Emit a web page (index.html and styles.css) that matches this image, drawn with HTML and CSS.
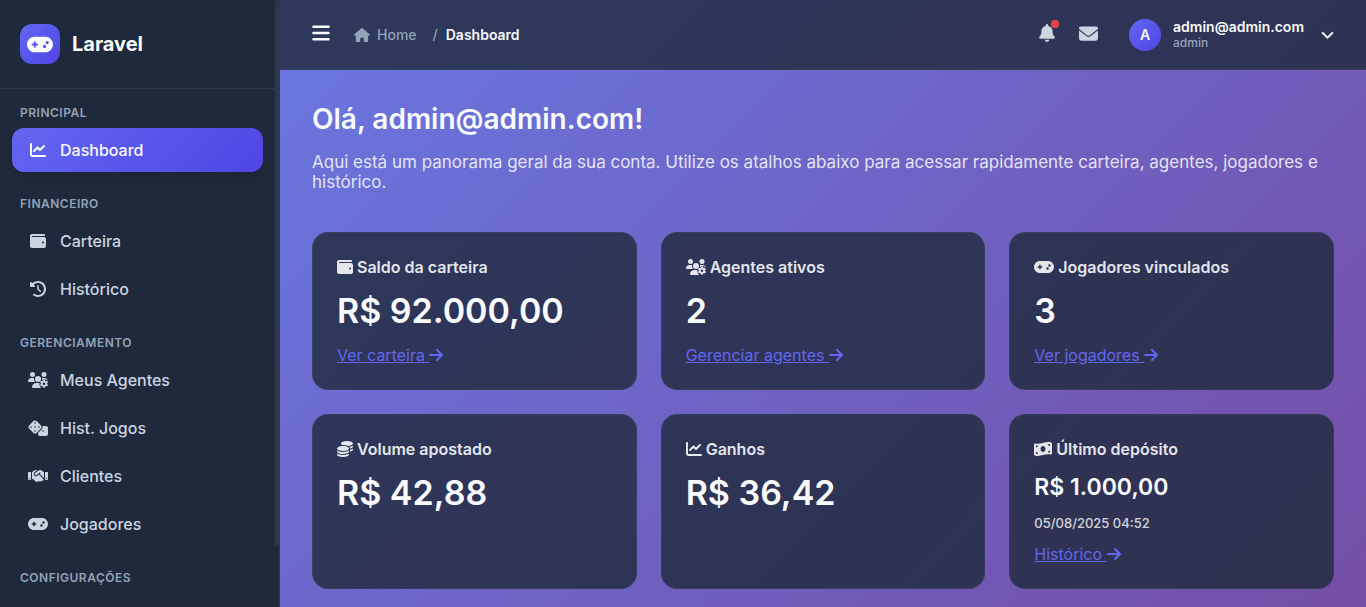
FILE: index.html
```html
<!DOCTYPE html>
<html lang="pt-BR">
<head>
<meta charset="utf-8">
<meta name="viewport" content="width=device-width, initial-scale=1">
<title>Dashboard - Laravel</title>
<link rel="stylesheet" href="styles.css">
</head>
<body>
<svg class="sprite" aria-hidden="true">
  <symbol id="gamepad" viewBox="0 0 640 512"><path fill-rule="evenodd" d="M192 64C86 64 0 150 0 256S86 448 192 448H448c106 0 192-86 192-192s-86-192-192-192H192zM496 168a40 40 0 1 1 0 80 40 40 0 1 1 0-80zM392 304a40 40 0 1 1 80 0 40 40 0 1 1 -80 0zM168 200c0-13.3 10.7-24 24-24s24 10.7 24 24v32h32c13.3 0 24 10.7 24 24s-10.7 24-24 24H216v32c0 13.3-10.7 24-24 24s-24-10.7-24-24V280H136c-13.3 0-24-10.7-24-24s10.7-24 24-24h32V200z"/></symbol>
  <symbol id="chart" viewBox="0 0 512 512"><path d="M64 64c0-17.7-14.3-32-32-32S0 46.3 0 64V400c0 44.2 35.8 80 80 80H480c17.7 0 32-14.3 32-32s-14.3-32-32-32H80c-8.8 0-16-7.2-16-16V64zm406.6 86.6c12.5-12.5 12.5-32.8 0-45.3s-32.8-12.5-45.3 0L320 210.7l-57.4-57.4c-12.5-12.5-32.8-12.5-45.3 0l-112 112c-12.5 12.5-12.5 32.8 0 45.3s32.8 12.5 45.3 0L240 221.3l57.4 57.4c12.5 12.5 32.8 12.5 45.3 0l128-128z"/></symbol>
  <symbol id="wallet" viewBox="0 0 512 512"><path fill-rule="evenodd" d="M64 32C28.7 32 0 60.7 0 96V416c0 35.3 28.7 64 64 64H448c35.3 0 64-28.7 64-64V192c0-35.3-28.7-64-64-64H80c-8.8 0-16-7.2-16-16s7.2-16 16-16H448c17.7 0 32-14.3 32-32s-14.3-32-32-32H64zM416 272a32 32 0 1 1 0 64 32 32 0 1 1 0-64z"/></symbol>
  <symbol id="history" viewBox="0 0 512 512"><path d="M75 75L41 41C25.9 25.9 0 36.6 0 57.9V168c0 13.3 10.7 24 24 24H134.1c21.4 0 32.1-25.9 17-41l-30.8-30.8C155 85.5 203 64 256 64c106 0 192 86 192 192s-86 192-192 192c-40.8 0-78.6-12.7-109.7-34.4c-14.5-10.1-34.4-6.6-44.6 7.9s-6.6 34.4 7.9 44.6C151.2 495 201.7 512 256 512c141.4 0 256-114.6 256-256S397.4 0 256 0C185.3 0 121.3 28.7 75 75zm181 53c-13.3 0-24 10.7-24 24V256c0 6.4 2.5 12.5 7 17l72 72c9.4 9.4 24.6 9.4 33.9 0s9.4-24.6 0-33.9l-65-65V152c0-13.3-10.7-24-24-24z"/></symbol>
  <symbol id="users" viewBox="0 0 640 512">
    <circle cx="144" cy="80" r="80"/><circle cx="512" cy="80" r="80"/><circle cx="320" cy="224" r="96"/>
    <path d="M21 320C9 320 0 310 0 299c0-59 48-107 107-107h43c16 0 31 3 45 10-2 7-3 14-3 22 0 38 17 72 43 96zM448 224c0-8-1-15-3-22 14-7 29-10 45-10h43c50 0 92 34 104 81-30-27-70-42-115-42-28 0-53 10-74 22zM128 485c0-74 60-133 133-133h92c5 0 10 0 15 1-10 60 8 120 52 159H155c-15 0-27-12-27-27z"/>
    <path fill-rule="evenodd" d="M480 246q32-8 64 0l6 36 21 12 35-12q22 24 32 54l-28 24v24l28 24q-10 30-32 54l-35-12-21 12-6 36q-32 8-64 0l-6-36-21-12-35 12q-22-24-32-54l28-24v-24l-28-24q10-30 32-54l35 12 21-12zM512 332a40 40 0 1 0 0 80 40 40 0 1 0 0-80z"/>
  </symbol>
  <symbol id="dice" viewBox="0 0 640 512"><path fill-rule="evenodd" d="M274.9 34.3c-28.1-28.1-73.7-28.1-101.8 0L34.3 173.1c-28.1 28.1-28.1 73.7 0 101.8L173.1 413.7c28.1 28.1 73.7 28.1 101.8 0L413.7 274.9c28.1-28.1 28.1-73.7 0-101.8L274.9 34.3zM200 224a24 24 0 1 1 48 0 24 24 0 1 1 -48 0zM96 200a24 24 0 1 1 0 48 24 24 0 1 1 0-48zM224 376a24 24 0 1 1 0-48 24 24 0 1 1 0 48zM352 200a24 24 0 1 1 0 48 24 24 0 1 1 0-48zM224 120a24 24 0 1 1 0-48 24 24 0 1 1 0 48zm96 328c0 35.3 28.7 64 64 64H576c35.3 0 64-28.7 64-64V256c0-35.3-28.7-64-64-64H461.7c11.6 36 3.1 77-25.4 105.5L320 413.8V448zM480 328a24 24 0 1 1 0 48 24 24 0 1 1 0-48z"/></symbol>
  <symbol id="handshake" viewBox="0 0 640 512"><path fill-rule="evenodd" d="M323.4 85.2l-96.8 78.4c-16.1 13-19.2 36.4-7 53.1c12.9 17.8 38 21.3 55.3 7.8l99.3-77.2c7-5.4 17-4.2 22.5 2.8s4.2 17-2.8 22.5l-20.9 16.2L512 316.8V128h-.7l-3.9-2.5L434.8 79c-15.3-9.8-33.2-15-51.4-15c-21.8 0-43 7.5-60 21.2zm22.8 124.4l-51.7 40.2C263 274.3 217.3 268 193.7 235.6c-22.2-30.5-16.6-73.1 12.7-96.8l83.2-67.3c-11.6-4.9-24.1-7.4-36.8-7.4C234 64 215.7 69.6 200 80l-72 48V352h28.2l91.4 83.4c19.6 17.9 49.9 16.5 67.8-3.1c5.5-6.1 9.2-13.2 11.1-20.6l17 15.6c19.5 17.9 49.9 16.6 67.8-2.9c4.5-4.9 7.8-10.6 9.9-16.5c19.4 13 45.8 10.3 62.1-7.5c17.9-19.5 16.6-49.9-2.9-67.8l-134.2-123zM16 128c-8.8 0-16 7.2-16 16V352c0 17.7 14.3 32 32 32H64c17.7 0 32-14.3 32-32V128H16zM48 320a16 16 0 1 1 0 32 16 16 0 1 1 0-32zM544 128V352c0 17.7 14.3 32 32 32h32c17.7 0 32-14.3 32-32V144c0-8.8-7.2-16-16-16H544zm32 208a16 16 0 1 1 32 0 16 16 0 1 1 -32 0z"/></symbol>
  <symbol id="coins" viewBox="0 0 512 512"><path d="M512 80c0 18-14.3 34.6-38.4 48c-29.1 16.1-72.5 27.5-122.3 30.9c-3.7-1.8-7.4-3.5-11.3-5C300.6 137.4 248.2 128 192 128c-8.3 0-16.4 .2-24.5 .6l-1.1-.6C142.3 114.6 128 98 128 80c0-44.2 86-80 192-80S512 35.8 512 80zM160.7 161.1c10.2-.7 20.7-1.1 31.3-1.1c62.2 0 117.4 12.3 152.5 31.4C369.3 204.9 384 221.7 384 240c0 4-.7 7.9-2.1 11.7c-4.6 13.2-17 25.3-35 35.5l-1.3 .7c-35 19.4-90.8 32-153.6 32c-59.6 0-112.9-11.3-148.2-29.1c-1.9-.9-3.7-1.9-5.5-2.9C14.3 274.6 0 258 0 240c0-34.8 53.4-64.5 128-75.4c10.5-1.5 21.4-2.7 32.7-3.5zM416 240c0-21.9-10.6-39.9-24.1-53.4c28.3-4.4 54.2-11.4 76.2-20.5c16.3-6.8 31.5-15.2 43.9-25.5V176c0 19.3-16.5 37.1-43.8 50.9c-14.6 7.4-32.4 13.7-52.4 18.5c.1-1.8 .2-3.5 .2-5.3zm-32 96c0 18-14.3 34.6-38.4 48c-1.8 1-3.6 1.9-5.5 2.9C304.9 404.7 251.6 416 192 416c-62.8 0-118.6-12.6-153.6-32C14.3 370.6 0 354 0 336V300.6c12.5 10.3 27.6 18.7 43.9 25.5C83.4 342.6 135.8 352 192 352s108.6-9.4 148.1-25.9c7.8-3.2 15.3-6.9 22.4-10.9c6.1-3.4 11.8-7.2 17.2-11.2c1.5-1.1 2.9-2.3 4.3-3.4V336zm32 0V278.1c19-4.2 36.5-9.5 52.1-16c16.3-6.8 31.5-15.2 43.9-25.5V272c0 10.5-5 21-14.9 30.9c-16.3 16.3-45 29.7-81.3 38.4c.1-1.7 .2-3.5 .2-5.3zM192 448c56.2 0 108.6-9.4 148.1-25.9c16.3-6.8 31.5-15.2 43.9-25.5V432c0 44.2-86 80-192 80S0 476.2 0 432V396.6c12.5 10.3 27.6 18.7 43.9 25.5C83.4 438.6 135.8 448 192 448z"/></symbol>
  <symbol id="money" viewBox="0 0 576 512"><path fill-rule="evenodd" d="M0 112.5V422.3c0 18 10.1 35 27 41.3c87 32.5 174 10.3 261-11.9c79.8-20.3 159.6-40.7 239.3-18.9c23 6.3 48.7-9.5 48.7-33.4V89.7c0-18-10.1-35-27-41.3C462 15.9 375 38.1 288 60.3C208.2 80.6 128.4 100.9 48.7 79.1C25.6 72.8 0 88.6 0 112.5zM288 352c-44.2 0-80-43-80-96s35.8-96 80-96s80 43 80 96s-35.8 96-80 96zM64 352c35.3 0 64 28.7 64 64H64V352zm64-208c0 35.3-28.7 64-64 64V144h64zM512 304v64H448c0-35.3 28.7-64 64-64zM448 96h64v64c-35.3 0-64-28.7-64-64z"/></symbol>
  <symbol id="bars" viewBox="0 0 448 512"><path d="M0 96C0 78.3 14.3 64 32 64H416c17.7 0 32 14.3 32 32s-14.3 32-32 32H32C14.3 128 0 113.7 0 96zM0 256c0-17.7 14.3-32 32-32H416c17.7 0 32 14.3 32 32s-14.3 32-32 32H32c-17.7 0-32-14.3-32-32zM448 416c0 17.7-14.3 32-32 32H32c-17.7 0-32-14.3-32-32s14.3-32 32-32H416c17.7 0 32 14.3 32 32z"/></symbol>
  <symbol id="home" viewBox="0 0 576 512"><path d="M575.8 255.5c0 18-15 32.1-32 32.1h-32l.7 160.2c0 2.7-.2 5.4-.5 8.1V472c0 22.1-17.9 40-40 40H392c-22.1 0-40-17.9-40-40V384c0-17.7-14.3-32-32-32H256c-17.7 0-32 14.3-32 32v88c0 22.1-17.9 40-40 40H104c-22.1 0-40-17.9-40-40V287.6H32c-18 0-32-14-32-32.1c0-9 3-17 10-24L266.4 8c7-7 15-8 22-8s15 2 21 7L564.8 231.5c8 7 12 15 11 24z"/></symbol>
  <symbol id="bell" viewBox="0 0 448 512"><path d="M224 0c-17.7 0-32 14.3-32 32V51.2C119 66 64 130.6 64 208v18.8c0 47-17.3 92.4-48.5 127.6l-7.4 8.3c-8.4 9.4-10.4 22.9-5.3 34.4S19.4 416 32 416H416c12.6 0 24-7.4 29.2-18.9s3.1-25-5.3-34.4l-7.4-8.3C401.3 319.2 384 273.9 384 226.8V208c0-77.4-55-142-128-156.8V32c0-17.7-14.3-32-32-32zm45.3 493.3c12-12 18.7-28.3 18.7-45.3H160c0 17 6.7 33.3 18.7 45.3s28.3 18.7 45.3 18.7s33.3-6.7 45.3-18.7z"/></symbol>
  <symbol id="mail" viewBox="0 0 512 512"><path d="M48 64C21.5 64 0 85.5 0 112c0 15.1 7.1 29.3 19.2 38.4L236.8 313.6c11.4 8.5 27 8.5 38.4 0L492.8 150.4c12.1-9.1 19.2-23.3 19.2-38.4c0-26.5-21.5-48-48-48H48zM0 176V384c0 35.3 28.7 64 64 64H448c35.3 0 64-28.7 64-64V176L294.4 339.2c-22.8 17.1-54 17.1-76.8 0L0 176z"/></symbol>
  <symbol id="chevron" viewBox="0 0 512 512"><path d="M233.4 406.6c12.5 12.5 32.8 12.5 45.3 0l192-192c12.5-12.5 12.5-32.8 0-45.3s-32.8-12.5-45.3 0L256 338.7 86.6 169.4c-12.5-12.5-32.8-12.5-45.3 0s-12.5 32.8 0 45.3l192 192z"/></symbol>
  <symbol id="arrow" viewBox="0 0 448 512"><path d="M438.6 278.6c12.5-12.5 12.5-32.8 0-45.3l-160-160c-12.5-12.5-32.8-12.5-45.3 0s-12.5 32.8 0 45.3L338.8 224 32 224c-17.7 0-32 14.3-32 32s14.3 32 32 32l306.7 0L233.4 393.4c-12.5 12.5-12.5 32.8 0 45.3s32.8 12.5 45.3 0l160-160z"/></symbol>
</svg>

<div class="app">
  <aside class="sidebar">
    <div class="sidebar-body">
      <div class="brand">
        <span class="brand-logo"><svg class="icon icon-brand"><use href="#gamepad"/></svg></span>
        <span class="brand-name">Laravel</span>
      </div>
      <nav class="nav">
        <section class="nav-group">
          <h2 class="nav-title">Principal</h2>
          <a class="nav-link active" href="#"><svg class="icon icon-md"><use href="#chart"/></svg>Dashboard</a>
        </section>
        <section class="nav-group">
          <h2 class="nav-title">Financeiro</h2>
          <a class="nav-link" href="#"><svg class="icon icon-md"><use href="#wallet"/></svg>Carteira</a>
          <a class="nav-link" href="#"><svg class="icon icon-md"><use href="#history"/></svg>Histórico</a>
        </section>
        <section class="nav-group">
          <h2 class="nav-title">Gerenciamento</h2>
          <a class="nav-link" href="#"><svg class="icon icon-md"><use href="#users"/></svg>Meus Agentes</a>
          <a class="nav-link" href="#"><svg class="icon icon-md"><use href="#dice"/></svg>Hist. Jogos</a>
          <a class="nav-link" href="#"><svg class="icon icon-md"><use href="#handshake"/></svg>Clientes</a>
          <a class="nav-link" href="#"><svg class="icon icon-md"><use href="#gamepad"/></svg>Jogadores</a>
        </section>
        <section class="nav-group">
          <h2 class="nav-title">Configurações</h2>
        </section>
      </nav>
    </div>
    <div class="scroll-track"><div class="scroll-thumb"></div></div>
  </aside>

  <div class="main">
    <header class="topbar">
      <div class="topbar-left">
        <button class="menu-button" type="button" aria-label="Menu"><svg class="icon icon-bars"><use href="#bars"/></svg></button>
        <nav class="breadcrumb" aria-label="Breadcrumb">
          <a class="crumb" href="#"><svg class="icon icon-home"><use href="#home"/></svg>Home</a>
          <span class="crumb-separator">/</span>
          <span class="crumb-current">Dashboard</span>
        </nav>
      </div>
      <div class="topbar-right">
        <button class="icon-button" type="button" aria-label="Notificações"><svg class="icon icon-bell"><use href="#bell"/></svg><span class="badge"></span></button>
        <button class="icon-button" type="button" aria-label="Mensagens"><svg class="icon icon-mail"><use href="#mail"/></svg></button>
        <button class="user" type="button">
          <span class="avatar">A</span>
          <span class="user-info"><span class="user-name">admin@admin.com</span><span class="user-role">admin</span></span>
          <svg class="icon icon-chevron"><use href="#chevron"/></svg>
        </button>
      </div>
    </header>

    <main class="content">
      <h1 class="title">Olá, admin@admin.com!</h1>
      <p class="intro">Aqui está um panorama geral da sua conta. Utilize os atalhos abaixo para acessar rapidamente carteira, agentes, jogadores e histórico.</p>
      <div class="cards">
        <article class="card">
          <h2 class="card-title"><svg class="icon icon-sq"><use href="#wallet"/></svg>Saldo da carteira</h2>
          <p class="value">R$ 92.000,00</p>
          <a class="card-link" href="#">Ver carteira <svg class="icon icon-arrow"><use href="#arrow"/></svg></a>
        </article>
        <article class="card">
          <h2 class="card-title"><svg class="icon icon-md"><use href="#users"/></svg>Agentes ativos</h2>
          <p class="value">2</p>
          <a class="card-link" href="#">Gerenciar agentes <svg class="icon icon-arrow"><use href="#arrow"/></svg></a>
        </article>
        <article class="card">
          <h2 class="card-title"><svg class="icon icon-md"><use href="#gamepad"/></svg>Jogadores vinculados</h2>
          <p class="value">3</p>
          <a class="card-link" href="#">Ver jogadores <svg class="icon icon-arrow"><use href="#arrow"/></svg></a>
        </article>
        <article class="card">
          <h2 class="card-title"><svg class="icon icon-sq"><use href="#coins"/></svg>Volume apostado</h2>
          <p class="value">R$ 42,88</p>
        </article>
        <article class="card">
          <h2 class="card-title"><svg class="icon icon-sq"><use href="#chart"/></svg>Ganhos</h2>
          <p class="value">R$ 36,42</p>
        </article>
        <article class="card">
          <h2 class="card-title"><svg class="icon icon-money"><use href="#money"/></svg>Último depósito</h2>
          <p class="value value-small">R$ 1.000,00</p>
          <p class="date">05/08/2025 04:52</p>
          <a class="card-link" href="#">Histórico <svg class="icon icon-arrow"><use href="#arrow"/></svg></a>
        </article>
      </div>
    </main>
  </div>
</div>
</body>
</html>
```
FILE: styles.css
```css
* { box-sizing: border-box; }

body {
  margin: 0;
  min-height: 100vh;
  background: linear-gradient(135deg, #667eea 0%, #764ba2 106%);
  color: #f8fafc;
  font: 500 16px/20px Inter, "Liberation Sans", sans-serif;
}

h1, h2, p { margin: 0; }
a { color: inherit; text-decoration: none; }
button { padding: 0; border: 0; background: none; color: inherit; font: inherit; cursor: pointer; }

.sprite { position: absolute; width: 0; height: 0; }
.icon { flex: none; height: 16px; fill: currentColor; }
.icon-md { width: 20px; }
.icon-sq { width: 16px; }
.icon-money { width: 18px; }
.icon-arrow { width: 14px; vertical-align: -2px; }
.icon-brand { width: 26px; height: 21px; }
.icon-bars { width: 18px; height: 20px; }
.icon-home { width: 16px; height: 14px; }
.icon-bell { width: 16px; height: 18px; }
.icon-mail { width: 19px; height: 19px; }
.icon-chevron { width: 13px; height: 13px; stroke: currentColor; stroke-width: 16px; }

.app { display: flex; min-height: 100vh; }

.sidebar {
  position: sticky;
  top: 0;
  display: flex;
  flex: none;
  width: 280px;
  height: 100vh;
  overflow: hidden;
  background: #1e293b;
  border-right: 1px solid #2b374b;
}
.sidebar-body { flex: 1; }
.scroll-track { width: 4px; }
.scroll-thumb { height: 90%; border-radius: 2px; background: #2c374a; }

.brand {
  display: flex;
  align-items: center;
  gap: 12px;
  padding: 24px 20px;
  border-bottom: 1px solid #2b374b;
}
.brand-logo {
  display: grid;
  place-items: center;
  width: 40px;
  height: 40px;
  border-radius: 12px;
  background: linear-gradient(135deg, #6366f1, #4f46e5);
}
.brand-name { font-size: 20px; font-weight: 700; }

.nav { display: flex; flex-direction: column; gap: 24px; padding: 16px 12px; }
.nav-group { display: flex; flex-direction: column; gap: 4px; }
.nav-title {
  padding: 0 8px;
  margin-bottom: 4px;
  color: #94a3b8;
  font-size: 12px;
  font-weight: 600;
  line-height: 15px;
  letter-spacing: 0.5px;
  text-transform: uppercase;
}
.nav-link {
  display: flex;
  align-items: center;
  gap: 12px;
  padding: 12px 16px;
  border-radius: 12px;
  color: #cbd5e1;
}
.nav-link.active {
  background: linear-gradient(135deg, #6366f1, #4f46e5);
  box-shadow: 0 4px 6px rgba(0, 0, 0, 0.1);
  color: #f8fafc;
}

.main { flex: 1; min-width: 0; }

.topbar {
  display: flex;
  align-items: center;
  justify-content: space-between;
  height: 70px;
  padding: 0 32px;
  background: rgba(30, 41, 59, 0.8);
  border-bottom: 1px solid rgba(71, 85, 105, 0.3);
}
.topbar-left, .topbar-right, .breadcrumb, .crumb { display: flex; align-items: center; }
.topbar-left { gap: 24px; }
.menu-button, .icon-button { display: flex; padding-bottom: 3px; }
.breadcrumb { gap: 8px; font-size: 14px; }
.crumb { gap: 7px; margin-right: 8px; color: #94a3b8; }
.crumb-separator { color: #94a3b8; }
.crumb-current { font-weight: 600; }

.topbar-right { gap: 24px; color: #cbd5e1; }
.icon-button { position: relative; }
.badge {
  position: absolute;
  top: -4px;
  right: -4px;
  width: 8px;
  height: 8px;
  border-radius: 50%;
  background: #ef4444;
}
.user { display: flex; align-items: center; gap: 12px; margin-left: 7px; color: #f8fafc; text-align: left; }
.avatar {
  display: grid;
  place-items: center;
  width: 32px;
  height: 32px;
  border-radius: 50%;
  background: linear-gradient(135deg, #6366f1, #4f46e5);
  font-size: 14px;
  font-weight: 600;
}
.user-info { display: flex; flex-direction: column; margin-right: 5px; padding-bottom: 2px; }
.user-name { font-size: 14px; font-weight: 600; line-height: 17px; }
.user-role { color: #94a3b8; font-size: 12px; line-height: 15px; }

.content { padding: 32px 32px 16px; }
.title { margin-bottom: 16px; font-size: 28px; font-weight: 600; line-height: 34px; }
.intro { margin-bottom: 40px; font-size: 17px; font-weight: 400; opacity: 0.85; }

.cards { display: grid; grid-template-columns: repeat(3, 1fr); gap: 24px; }
.card {
  display: flex;
  flex-direction: column;
  align-items: flex-start;
  gap: 12px;
  padding: 24px;
  border: 1px solid rgba(71, 85, 105, 0.3);
  border-radius: 16px;
  background: rgba(30, 41, 59, 0.8);
}
.card-title {
  display: flex;
  align-items: center;
  gap: 4px;
  font-size: 16px;
  font-weight: 600;
  line-height: 20px;
  opacity: 0.9;
}
.value { font-size: 34px; font-weight: 600; line-height: 44px; }
.value-small { font-size: 23px; line-height: 32px; }
.date { font-size: 13px; line-height: 17px; opacity: 0.8; }
.card-link { color: #6366f1; font-weight: 400; text-decoration: underline; }
```
